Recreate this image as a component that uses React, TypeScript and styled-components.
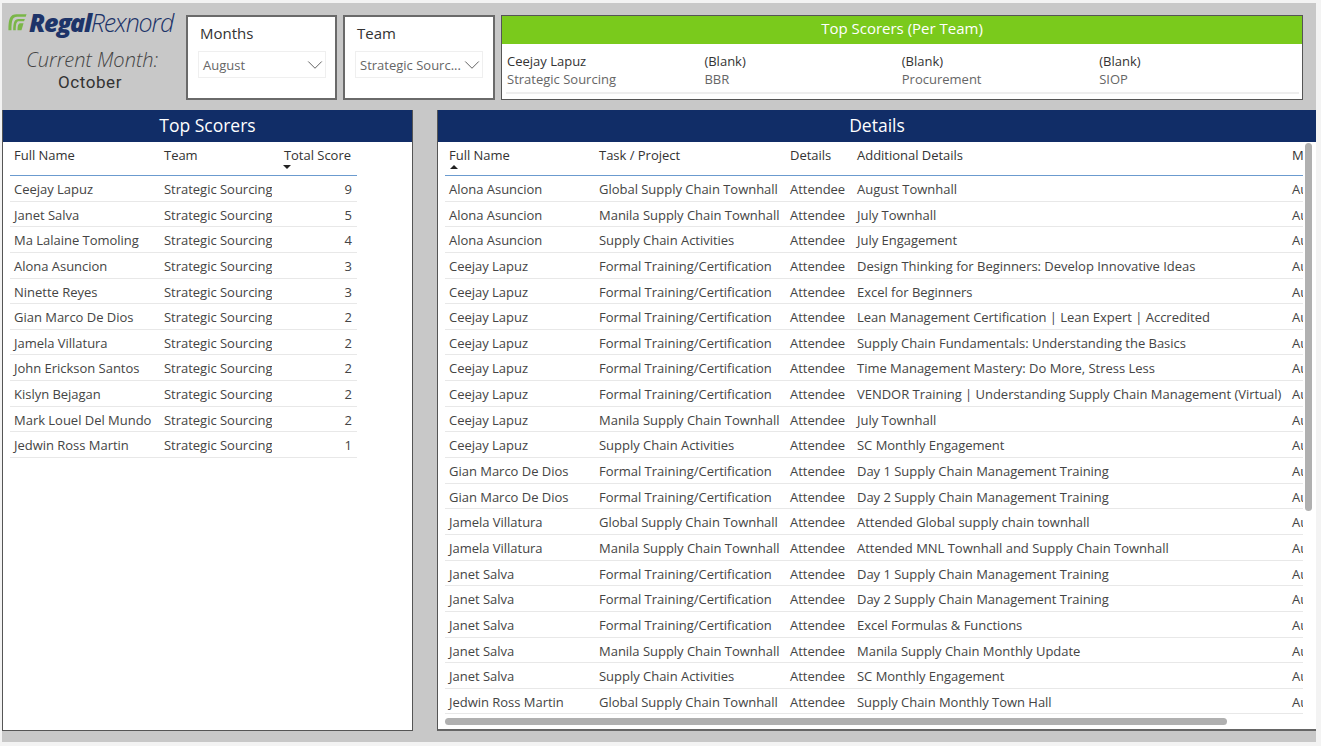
import styled, { createGlobalStyle } from 'styled-components';
import { ChevronDown } from 'lucide-react';

const GlobalStyle = createGlobalStyle`
  html, body {
    margin: 0;
    padding: 0;
    background: #f3f3f3;
    overflow: hidden;
  }
  * {
    box-sizing: border-box;
  }
`;

const scorers = [
  ['Ceejay Lapuz', 9],
  ['Janet Salva', 5],
  ['Ma Lalaine Tomoling', 4],
  ['Alona Asuncion', 3],
  ['Ninette Reyes', 3],
  ['Gian Marco De Dios', 2],
  ['Jamela Villatura', 2],
  ['John Erickson Santos', 2],
  ['Kislyn Bejagan', 2],
  ['Mark Louel Del Mundo', 2],
  ['Jedwin Ross Martin', 1],
] as const;

const GLOBAL = 'Global Supply Chain Townhall';
const MANILA = 'Manila Supply Chain Townhall';
const ACTIVITIES = 'Supply Chain Activities';
const FORMAL = 'Formal Training/Certification';

const details = [
  ['Alona Asuncion', GLOBAL, 'August Townhall'],
  ['Alona Asuncion', MANILA, 'July Townhall'],
  ['Alona Asuncion', ACTIVITIES, 'July Engagement'],
  ['Ceejay Lapuz', FORMAL, 'Design Thinking for Beginners: Develop Innovative Ideas'],
  ['Ceejay Lapuz', FORMAL, 'Excel for Beginners'],
  ['Ceejay Lapuz', FORMAL, 'Lean Management Certification | Lean Expert | Accredited'],
  ['Ceejay Lapuz', FORMAL, 'Supply Chain Fundamentals: Understanding the Basics'],
  ['Ceejay Lapuz', FORMAL, 'Time Management Mastery: Do More, Stress Less'],
  ['Ceejay Lapuz', FORMAL, 'VENDOR Training | Understanding Supply Chain Management (Virtual)'],
  ['Ceejay Lapuz', MANILA, 'July Townhall'],
  ['Ceejay Lapuz', ACTIVITIES, 'SC Monthly Engagement'],
  ['Gian Marco De Dios', FORMAL, 'Day 1 Supply Chain Management Training'],
  ['Gian Marco De Dios', FORMAL, 'Day 2 Supply Chain Management Training'],
  ['Jamela Villatura', GLOBAL, 'Attended Global supply chain townhall'],
  ['Jamela Villatura', MANILA, 'Attended MNL Townhall and Supply Chain Townhall'],
  ['Janet Salva', FORMAL, 'Day 1 Supply Chain Management Training'],
  ['Janet Salva', FORMAL, 'Day 2 Supply Chain Management Training'],
  ['Janet Salva', FORMAL, 'Excel Formulas & Functions'],
  ['Janet Salva', MANILA, 'Manila Supply Chain Monthly Update'],
  ['Janet Salva', ACTIVITIES, 'SC Monthly Engagement'],
  ['Jedwin Ross Martin', GLOBAL, 'Supply Chain Monthly Town Hall'],
];

const topTeams = [
  ['Ceejay Lapuz', 'Strategic Sourcing'],
  ['(Blank)', 'BBR'],
  ['(Blank)', 'Procurement'],
  ['(Blank)', 'SIOP'],
];

const SCORER_COLUMNS = '150px 112px 81px';
const DETAIL_COLUMNS = '150px 191px 67px 435px 60px';

export default function App() {
  return (
    <>
      <GlobalStyle />
      <Page>
        <TopBar>
          <Brand>
            <Logo>
              <LogoMark viewBox="0 0 22 20" aria-hidden="true">
                <path d="M0.5 19.5 C0.5 6 2.5 1 10 1 L21.5 1 L20.5 4 L10.5 4 C5.5 4 4 8 4 19.5 Z" fill="#7ab648" />
                <path d="M6 19.5 C6 11 7.5 6.5 12 6.5 L19.5 6.5 L18.6 9 L12.5 9 C10 9 9 12 9 19.5 Z" fill="#7ab648" />
                <path d="M11 19.5 C11 14 12 11.5 14.5 11.5 L18 11.5 L15.6 19.5 Z" fill="#7ab648" />
              </LogoMark>
              <LogoBold>Regal</LogoBold>
              <LogoLight>Rexnord</LogoLight>
            </Logo>
            <CurrentLabel>Current Month:</CurrentLabel>
            <CurrentValue>October</CurrentValue>
          </Brand>

          <SlicerCard $width={151}>
            <SlicerTitle>Months</SlicerTitle>
            <Dropdown>
              <DropdownText>August</DropdownText>
              <DropdownChevron size={26} strokeWidth={0.85} />
            </Dropdown>
          </SlicerCard>
          <SlicerCard $width={152}>
            <SlicerTitle>Team</SlicerTitle>
            <Dropdown>
              <DropdownText>Strategic Sourc...</DropdownText>
              <DropdownChevron size={26} strokeWidth={0.85} />
            </Dropdown>
          </SlicerCard>

          <TeamsCard>
            <TeamsHeader>Top Scorers (Per Team)</TeamsHeader>
            <TeamsRow>
              {topTeams.map(([name, team]) => (
                <TeamCell key={team}>
                  <TeamName>{name}</TeamName>
                  <TeamLabel>{team}</TeamLabel>
                </TeamCell>
              ))}
            </TeamsRow>
          </TeamsCard>
        </TopBar>

        <Panels>
          <ScorersPanel>
            <PanelTitle>Top Scorers</PanelTitle>
            <TableBody>
              <Table $width={347}>
                <HeaderRow $columns={SCORER_COLUMNS}>
                  <HeaderCell>Full Name</HeaderCell>
                  <HeaderCell>Team</HeaderCell>
                  <HeaderCell $right>
                    Total Score
                    <SortArrow $down $left={11} />
                  </HeaderCell>
                </HeaderRow>
                {scorers.map(([name, score]) => (
                  <Row key={name} $columns={SCORER_COLUMNS}>
                    <Cell>{name}</Cell>
                    <Cell>Strategic Sourcing</Cell>
                    <Cell $right>{score}</Cell>
                  </Row>
                ))}
              </Table>
            </TableBody>
          </ScorersPanel>

          <DetailsPanel>
            <PanelTitle>Details</PanelTitle>
            <TableBody>
              <Table $width={858}>
                <HeaderRow $columns={DETAIL_COLUMNS}>
                  <HeaderCell>
                    Full Name
                    <SortArrow $left={5} />
                  </HeaderCell>
                  <HeaderCell>Task / Project</HeaderCell>
                  <HeaderCell>Details</HeaderCell>
                  <HeaderCell>Additional Details</HeaderCell>
                  <HeaderCell>Month</HeaderCell>
                </HeaderRow>
                {details.map(([name, task, extra], i) => (
                  <Row key={i} $columns={DETAIL_COLUMNS}>
                    <Cell>{name}</Cell>
                    <Cell>{task}</Cell>
                    <Cell>Attendee</Cell>
                    <Cell>{extra}</Cell>
                    <Cell>August</Cell>
                  </Row>
                ))}
              </Table>
              <VerticalThumb />
              <HorizontalThumb />
            </TableBody>
          </DetailsPanel>
        </Panels>
      </Page>
    </>
  );
}

const Page = styled.div`
  width: 1314px;
  height: 739px;
  margin: 3px 0 0 2px;
  padding-top: 12px;
  background: #c8c8c8;
  font-family: 'Open Sans', 'Liberation Sans', sans-serif;
  color: #333;
  overflow: hidden;
`;

const TopBar = styled.div`
  display: flex;
  gap: 6px;
  height: 85px;
`;

const Brand = styled.div`
  width: 184px;
  margin-right: -6px;
  padding-right: 4px;
  display: flex;
  flex-direction: column;
  align-items: center;
  color: #444;
`;

const Logo = styled.div`
  width: 184px;
  height: 24px;
  margin-top: -5px;
  padding-left: 8px;
  display: flex;
  align-items: center;
  white-space: nowrap;
  font-family: 'Open Sans', sans-serif;
  font-style: italic;
  font-size: 25px;
  color: #1d3469;
`;

const LogoMark = styled.svg`
  width: 19px;
  height: 18px;
  margin-right: 2px;
  flex: none;
`;

const LogoBold = styled.span`
  font-weight: 800;
  letter-spacing: -1.3px;
`;

const LogoLight = styled.span`
  font-weight: 300;
  letter-spacing: -1.1px;
`;

const CurrentLabel = styled.div`
  margin-top: 13px;
  font-size: 20px;
  line-height: 26px;
  font-style: italic;
  font-weight: 300;
  white-space: nowrap;
`;

const CurrentValue = styled.div`
  margin: -2px 4px 0 0;
  font-family: 'Roboto', sans-serif;
  font-size: 17px;
  line-height: 22px;
  letter-spacing: 0.6px;
  color: #333;
`;

const SlicerCard = styled.div<{ $width: number }>`
  width: ${(p) => p.$width}px;
  height: 85px;
  padding: 7px 10px 0;
  background: #fff;
  border: 2px solid #6a6a6a;
`;

const SlicerTitle = styled.div`
  padding-left: 2px;
  font-size: 15px;
  line-height: 19px;
  color: #333;
`;

const Dropdown = styled.div`
  width: 128px;
  height: 27px;
  margin: 8px 0 0 auto;
  padding: 0 4px;
  border: 1px solid #efefef;
  display: flex;
  align-items: center;
  justify-content: space-between;
  overflow: hidden;
`;

const DropdownText = styled.span`
  padding-top: 1px;
  font-size: 13px;
  color: #666;
  white-space: nowrap;
`;

const DropdownChevron = styled(ChevronDown)`
  flex: none;
  margin: 0 -6.5px 0 -9px;
  color: #555;
`;

const TeamsCard = styled.div`
  width: 802px;
  height: 85px;
  background: #fff;
  border: 1px solid #555;
  display: flex;
  flex-direction: column;
`;

const TeamsHeader = styled.div`
  height: 28px;
  background: #7aca1c;
  color: #fff;
  font-size: 15px;
  line-height: 24px;
  text-align: center;
`;

const TeamsRow = styled.div`
  margin: 8px 3px 0 4px;
  height: 42px;
  display: grid;
  grid-template-columns: repeat(4, 197.4px);
  border-bottom: 2px solid #eeeeee;
`;

const TeamCell = styled.div`
  padding-left: 1px;
  font-size: 13px;
  line-height: 18px;
`;

const TeamName = styled.div`
  color: #333;
`;

const TeamLabel = styled.div`
  color: #666;
`;

const Panels = styled.div`
  display: flex;
  gap: 24px;
  margin-top: 10px;
`;

const ScorersPanel = styled.section`
  width: 411px;
  height: 621px;
  display: flex;
  flex-direction: column;
  background: #fff;
  border: 1px solid #555;
  border-top: 0;
`;

const DetailsPanel = styled.section`
  width: 879px;
  height: 621px;
  display: flex;
  flex-direction: column;
  background: #fff;
  border-left: 1px solid #555;
  border-bottom: 2px solid #666;
`;

const PanelTitle = styled.h2`
  margin: 0;
  flex: none;
  height: 32px;
  background: #112d67;
  color: #fff;
  font-size: 17.5px;
  font-weight: 400;
  line-height: 31px;
  text-align: center;
`;

const TableBody = styled.div`
  position: relative;
  flex: 1;
  padding: 0 0 0 7px;
  overflow: hidden;
`;

const Table = styled.div<{ $width: number }>`
  width: ${(p) => p.$width}px;
  overflow: hidden;
`;

const HeaderRow = styled.div<{ $columns: string }>`
  display: grid;
  grid-template-columns: ${(p) => p.$columns};
  height: 34px;
  border-bottom: 1px solid #6b9bcf;
  font-size: 13px;
  color: #333;
`;

const HeaderCell = styled.div<{ $right?: boolean }>`
  position: relative;
  padding: 4px ${(p) => (p.$right ? '2px' : '4px')} 0 4px;
  line-height: 18px;
  white-space: nowrap;
  letter-spacing: -0.02px;
  text-align: ${(p) => (p.$right ? 'right' : 'left')};
`;

const SortArrow = styled.span<{ $down?: boolean; $left: number }>`
  position: absolute;
  top: 23px;
  left: ${(p) => p.$left}px;
  width: 0;
  height: 0;
  border-left: 4px solid transparent;
  border-right: 4px solid transparent;
  ${(p) => (p.$down ? 'border-top: 4px solid #222;' : 'border-bottom: 4px solid #222;')}
`;

const Row = styled.div<{ $columns: string }>`
  display: grid;
  grid-template-columns: ${(p) => p.$columns};
  height: 25.65px;
  border-bottom: 1px solid #e8e8e8;
  font-size: 13px;
  line-height: 26px;
  color: #444;
`;

const Cell = styled.div<{ $right?: boolean }>`
  padding: 0 ${(p) => (p.$right ? '1px' : '4px')} 0 4px;
  white-space: nowrap;
  overflow: hidden;
  letter-spacing: -0.02px;
  text-align: ${(p) => (p.$right ? 'right' : 'left')};
`;

const VerticalThumb = styled.div`
  position: absolute;
  top: 1px;
  left: 867px;
  width: 7px;
  height: 368px;
  border-radius: 4px;
  background: #b0b0b0;
`;

const HorizontalThumb = styled.div`
  position: absolute;
  top: 576px;
  left: 7px;
  width: 782px;
  height: 7px;
  border-radius: 4px;
  background: #b0b0b0;
`;
